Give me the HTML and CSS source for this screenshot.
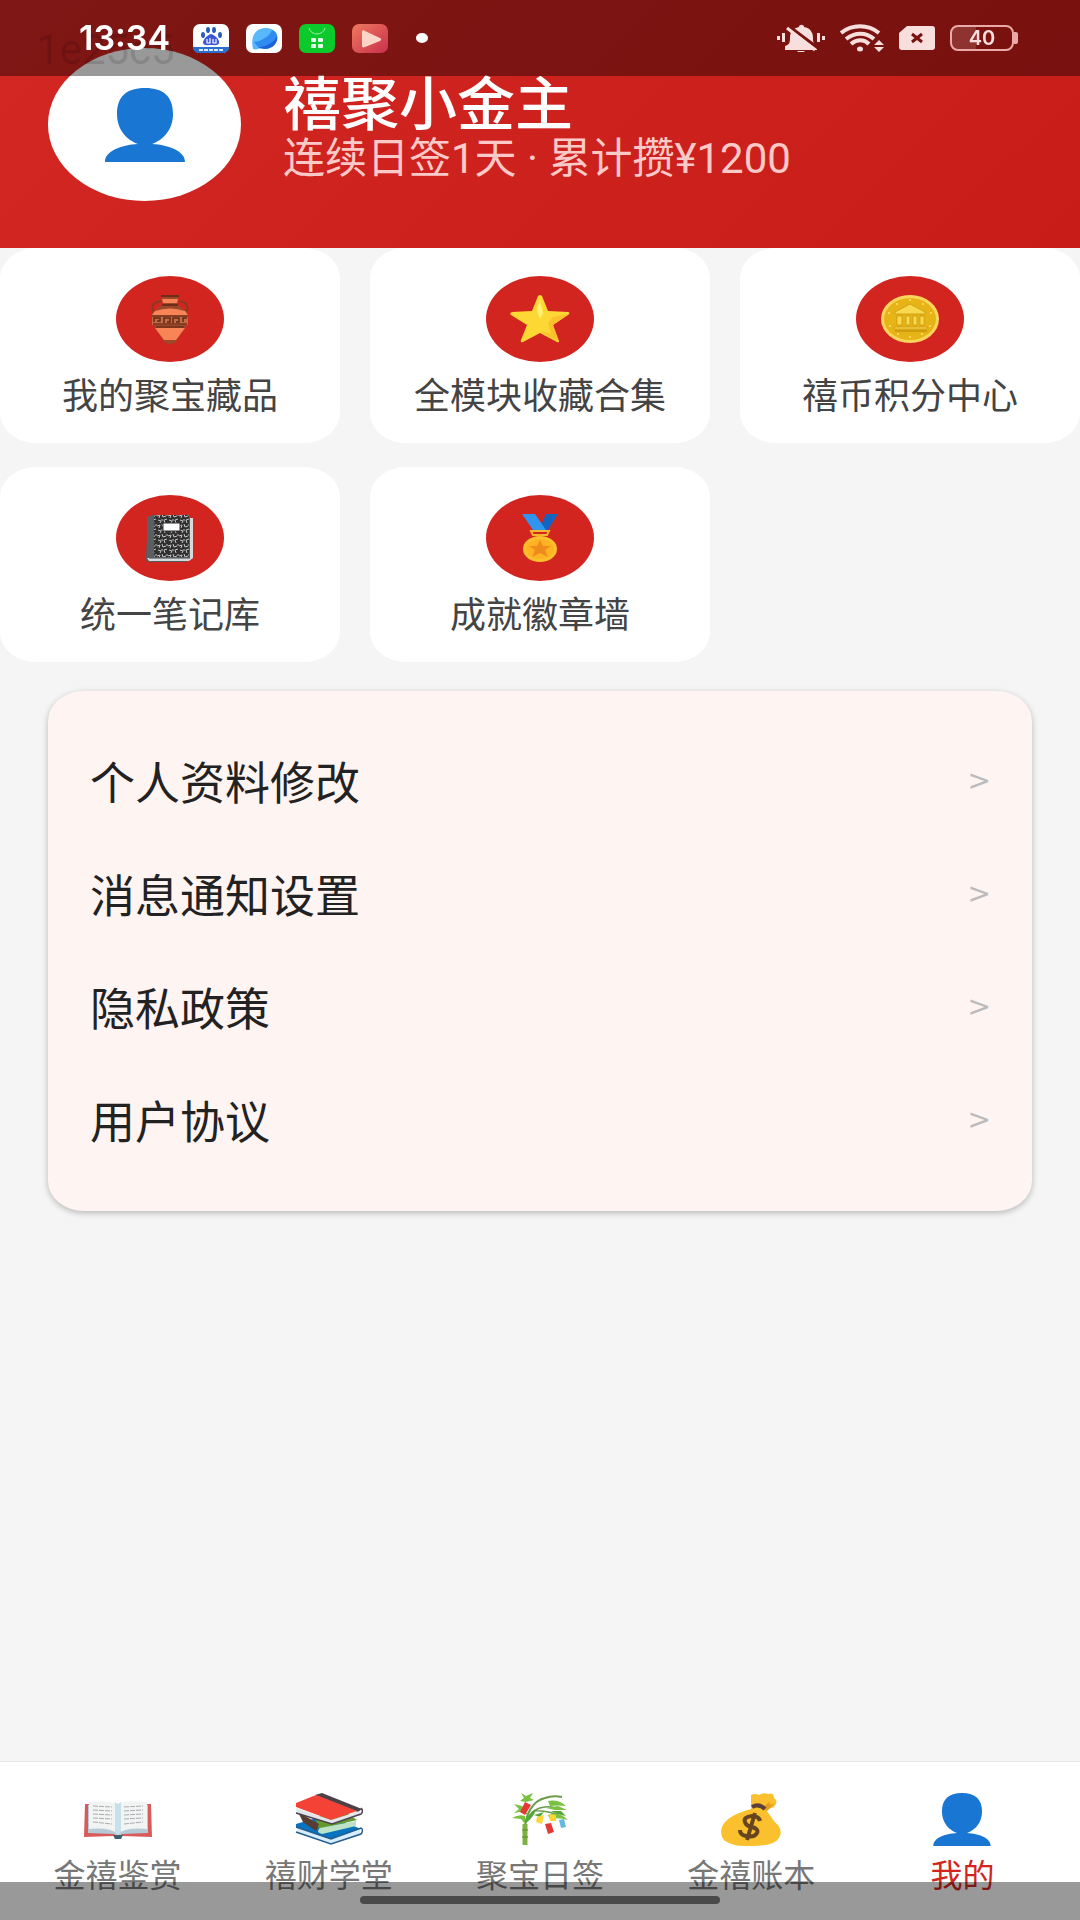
FILE: index.html
```html
<!DOCTYPE html>
<html lang="zh-CN">
<head>
  <meta charset="UTF-8">
  <meta name="viewport" content="width=device-width, initial-scale=1.0">
  <title>我的</title>
  <link rel="stylesheet" href="styles.css">
</head>
<body>

  <!-- Shared shapes -->
  <svg class="sprite" aria-hidden="true">
    <symbol id="person" viewBox="0 0 80 74">
      <path fill="#1976d2" d="M40 0C59 0 68 9 68 26C68 42 58 52 47 56C64 57 80 63 80 74H0C0 63 16 57 33 56C22 52 12 42 12 26C12 9 21 0 40 0Z"/>
    </symbol>
  </svg>

  <div class="status-bar">
    <div class="status-left">
      <span class="status-time">13:34</span>
      <svg class="app-icon" viewBox="0 0 36 29">
        <rect width="36" height="29" rx="7" fill="#fff"/>
        <path fill="#2a6fd0" d="M0 23H36C36 27 33 29 29 29H7C3 29 0 27 0 23Z"/>
        <g fill="#2a5fb4"><ellipse cx="10" cy="11" rx="2" ry="3"/><ellipse cx="15" cy="6" rx="2" ry="3"/><ellipse cx="21" cy="6" rx="2" ry="3"/><ellipse cx="27" cy="11" rx="2" ry="3"/></g>
        <path fill="#3a55d8" d="M18 10C22 11 27 16 26 19C25 22 21 21 18 21S11 22 10 19C10 16 14 11 18 10Z"/>
        <path stroke="#fff" stroke-width="1.2" fill="none" d="M14 15V19H17V14M20 15V19H23V15"/>
        <path stroke="#dceaff" stroke-width="2" stroke-dasharray="4 1" d="M6 26H31"/>
      </svg>
      <svg class="app-icon" viewBox="0 0 36 29">
        <rect width="36" height="29" rx="7" fill="#fff"/>
        <path fill="#59b8fb" d="M7 25C4 10 11 4 20 4C28 4 32 9 31 15C30 23 22 26 15 24C12 25 10 26 7 25Z"/>
        <path fill="#1c62d8" d="M31 11C33 18 27 25 19 25C16 25 13 24 12 23C21 22 28 18 31 11Z"/>
        <path fill="#2f8bf0" d="M8 18C14 18 24 12 26 6C30 8 31 10 31 12C28 19 20 22 12 23Z"/>
      </svg>
      <svg class="app-icon" viewBox="0 0 36 29">
        <rect width="36" height="29" rx="7" fill="#0cc92c"/>
        <path d="M10 4C12 12 24 12 26 4" fill="none" stroke="#9df0a6" stroke-width="1"/>
        <g fill="#e5ffe8"><rect x="12" y="14" width="5" height="4" rx="1"/><rect x="19" y="14" width="5" height="4" rx="1"/><rect x="12" y="20" width="5" height="4" rx="1"/><rect x="19" y="20" width="5" height="4" rx="1"/></g>
      </svg>
      <svg class="app-icon" viewBox="0 0 36 29">
        <defs><linearGradient id="player" x1="0" y1="0" x2="1" y2="1"><stop offset="0" stop-color="#f0795f"/><stop offset="1" stop-color="#c8304c"/></linearGradient></defs>
        <rect width="36" height="29" rx="7" fill="url(#player)"/>
        <path fill="#ffd5c8" d="M10 8C10 6 12 6 13 7L28 14C30 15 29 16 28 17L13 23C11 24 10 23 10 22Z"/>
      </svg>
      <span class="status-dot"></span>
    </div>
    <div class="status-right">
      <svg width="48" height="28" viewBox="0 0 48 28" fill="#f8dedd">
        <path d="M8 26V22C12 21 13 19 13 14C13 7 17 4 22 3C22 0 27 0 27 3C33 4 36 8 36 14C36 19 37 21 40 22V26Z"/>
        <path d="M20 27H28C27 29 21 29 20 27Z"/>
        <rect x="0" y="12" width="3" height="4"/><rect x="5" y="9" width="3" height="9"/><rect x="40" y="9" width="3" height="9"/><rect x="45" y="12" width="3" height="4"/>
        <path stroke="#781310" stroke-width="3" d="M13 3L41 24"/>
        <path stroke="#f8dedd" stroke-width="3" d="M10 4L38 26"/>
      </svg>
      <svg width="44" height="28" viewBox="0 0 44 28">
        <g fill="none" stroke="#f8dedd" stroke-width="4"><path d="M1 9C12 0 28 0 39 9"/><path d="M6 15C15 8 26 8 34 15"/><path d="M11 20C17 15 24 15 29 20"/></g>
        <ellipse cx="20" cy="25" rx="3" ry="2.5" fill="#f8dedd"/>
        <path fill="#f8dedd" d="M34 21L39 16L44 21ZM34 23H44L39 28Z"/>
      </svg>
      <svg width="36" height="28" viewBox="0 0 36 28">
        <path fill="#f8dedd" d="M0 9L8 2H33Q36 2 36 5V23Q36 26 33 26H3Q0 26 0 23Z"/>
        <path stroke="#781310" stroke-width="3" d="M13 10L23 18M23 10L13 18"/>
      </svg>
      <span class="battery">40</span>
    </div>
  </div>

  <header class="profile">
    <div class="avatar">
      <svg width="80" height="74"><use href="#person"/></svg>
    </div>
    <div class="profile-info">
      <h1 class="profile-name">禧聚小金主</h1>
      <p class="profile-stats">连续日签1天 · 累计攒¥1200</p>
    </div>
    <span class="user-code">1e25c5</span>
  </header>

  <main>
    <nav class="feature-grid">
      <a href="#" class="feature">
        <span class="feature-icon">
          <svg width="38" height="50" viewBox="0 0 38 50">
            <path d="M10 7C-1 9 1 14 3 20M28 7C39 9 37 14 35 20" fill="none" stroke="#8b3a20" stroke-width="2"/>
            <path fill="#9b482b" d="M10 1H28L26 9C29 14 34 15 37 20C39 32 29 39 25 48Q19 52 13 48C9 39-1 32 1 20C4 15 9 14 12 9Z"/>
            <path fill="#f98557" d="M11 5H27L26 9H12ZM4 17Q19 12 34 17L37 21H1ZM4 34H34L25 46H13Z"/>
            <path fill="#c86a41" d="M1 21H37V31H1Z"/>
            <path d="M1 22H37M2 30H36M5 33H33" stroke="#713019" stroke-width="1.5"/>
            <path d="M3 28V24H9V27H6M13 29V24H19V28H16M22 29V24H28V28H25M32 28V24H36" fill="none" stroke="#5f2b18" stroke-width="1.5"/>
            <path d="M10 2H28M11 11H27" stroke="#6f2c19" stroke-width="2"/>
          </svg>
        </span>
        <span class="feature-label">我的聚宝藏品</span>
      </a>
      <a href="#" class="feature">
        <span class="feature-icon">
          <svg width="60" height="48" viewBox="0 0 60 48">
            <path fill="#fdd835" d="M28 1Q30-1 32 1L38 16L58 17Q61 18 58 20L43 30L49 46Q49 48 47 47L30 38L13 47Q10 48 11 45L17 30L1 20Q-1 18 2 17L22 16Z"/>
            <path fill="#fff176" d="M30 4L33 18L30 24L27 15Z"/>
            <path fill="#fbc02d" d="M43 22L58 19L43 30L48 46L30 36L41 39L38 28Z"/>
          </svg>
        </span>
        <span class="feature-label">全模块收藏合集</span>
      </a>
      <a href="#" class="feature">
        <span class="feature-icon">
          <svg width="58" height="48" viewBox="0 0 58 48">
            <ellipse cx="29" cy="24" rx="29" ry="24" fill="#f9d65b"/>
            <ellipse cx="29" cy="24" rx="26" ry="21" fill="#e6b417"/>
            <path fill="#f8d94d" stroke="#c7930b" stroke-width=".7" d="M14 17L29 9L44 17V19H14ZM16 21H21V30H16ZM25 21H29V30H25ZM32 21H36V30H32ZM39 21H43V30H39ZM13 32H46V34H13Z"/>
            <path d="M14 36H46" stroke="#b9860b"/>
            <g fill="#ffdf70"><circle cx="29" cy="5" r="1"/><circle cx="16" cy="9" r="1"/><circle cx="42" cy="9" r="1"/><circle cx="8" cy="18" r="1"/><circle cx="50" cy="18" r="1"/><circle cx="9" cy="31" r="1"/><circle cx="49" cy="31" r="1"/><circle cx="17" cy="39" r="1"/><circle cx="29" cy="42" r="1"/><circle cx="41" cy="39" r="1"/></g>
          </svg>
        </span>
        <span class="feature-label">禧币积分中心</span>
      </a>
      <a href="#" class="feature">
        <span class="feature-icon">
          <svg width="48" height="48" viewBox="0 0 48 48">
            <defs>
              <pattern id="speckle" width="11" height="10" patternUnits="userSpaceOnUse">
                <rect width="11" height="10" fill="#303030"/>
                <path d="M0 2L3 1L2 4M5 0L6 3L9 2M10 5L7 6L8 9M1 6L4 7L3 9M5 5L5 7M10 0V2" fill="none" stroke="#c4c4c4" stroke-width="1"/>
              </pattern>
            </defs>
            <path fill="#565b60" d="M2 3L7 1H44V44L40 48H2Q0 47 0 44Z"/>
            <path fill="#d5dadd" d="M44 4H47V44L43 47H3L1 44H44Z"/>
            <path fill="#8b9298" d="M3 44H44V45H3Z"/>
            <rect x="8" y="1" width="35" height="42" fill="url(#speckle)"/>
            <path fill="#5b5f62" d="M1 3L8 1V43L1 44Z"/>
            <rect x="17" y="9" width="17" height="8" fill="#fff" stroke="#333"/>
          </svg>
        </span>
        <span class="feature-label">统一笔记库</span>
      </a>
      <a href="#" class="feature">
        <span class="feature-icon">
          <svg width="36" height="50" viewBox="0 0 36 50">
            <path fill="#1565c0" d="M24 1H36L26 17H17Z"/>
            <path fill="#2f95ee" d="M0 1H13L24 17H11Z"/>
            <path d="M9 18H27L25 22H11Z" fill="none" stroke="#f4b72f" stroke-width="2"/>
            <ellipse cx="18" cy="36" rx="17" ry="13" fill="#fcc02f"/>
            <ellipse cx="18" cy="36" rx="14" ry="10" fill="#ffb322"/>
            <path fill="#ef8b1c" d="M18 27L21 33H29L23 37L26 44L18 40L10 44L13 37L7 33H15Z"/>
          </svg>
        </span>
        <span class="feature-label">成就徽章墙</span>
      </a>
    </nav>

    <section class="settings">
      <a href="#" class="settings-item"><span>个人资料修改</span><span class="arrow">&gt;</span></a>
      <a href="#" class="settings-item"><span>消息通知设置</span><span class="arrow">&gt;</span></a>
      <a href="#" class="settings-item"><span>隐私政策</span><span class="arrow">&gt;</span></a>
      <a href="#" class="settings-item"><span>用户协议</span><span class="arrow">&gt;</span></a>
    </section>
  </main>

  <nav class="tab-bar">
    <a href="#" class="tab">
      <svg class="tab-icon" viewBox="0 0 68 53">
        <path fill="#d85b5b" d="M1 11H67L68 44L38 43L34 46L30 43L0 44Z"/>
        <path fill="#b6cad5" d="M4 12H64V40L38 41L34 45L30 41L4 40Z"/>
        <path fill="#f2f3f3" d="M5 9Q25 7 34 11Q43 7 63 9V36Q42 34 34 41Q25 34 5 36Z"/>
        <path fill="#c6e0ec" d="M31 9L34 11L37 9V39L34 42L31 39Z"/>
        <path d="M9 13L28 14M9 17L28 18M9 21L28 22M9 25L28 26M9 29L28 31M40 14L59 13M40 18L59 17M40 22L59 21M40 26L59 25M40 31L59 29" stroke="#a9adaf" stroke-width="1" stroke-dasharray="5 1"/>
        <path fill="#40616c" d="M29 42H39L37 46H31Z"/>
      </svg>
      <span class="tab-label">金禧鉴赏</span>
    </a>
    <a href="#" class="tab">
      <svg class="tab-icon" viewBox="0 0 68 53">
        <path fill="#0873be" d="M1 31L32 22L66 36L36 47L1 34Z"/>
        <path fill="#d7edfb" d="M2 35L36 46L65 36V41L36 51L2 39Z"/>
        <path d="M1 39L36 51L66 41Q69 37 66 35L36 46L1 34" fill="none" stroke="#235e91" stroke-width="1.5"/>
        <path fill="#65992f" d="M20 24L50 19L62 27L24 36Z"/>
        <path fill="#bce2c7" d="M25 35L61 28V33L27 41Q20 39 25 35Z"/>
        <path fill="#593c32" d="M3 19L24 31L21 38L8 29Z"/>
        <path fill="#4b4147" d="M20 2L27 0L67 16L63 19Z"/>
        <path fill="#f44336" d="M1 10L21 2L62 18L36 27L1 14Z"/>
        <path fill="#e4e5e9" d="M1 15L36 27L65 18V22L37 31L2 20Z"/>
        <path d="M1 20L37 31L66 21Q69 18 66 15" fill="none" stroke="#494351" stroke-width="1.5"/>
      </svg>
      <span class="tab-label">禧财学堂</span>
    </a>
    <a href="#" class="tab">
      <svg class="tab-icon" viewBox="0 0 68 53">
        <path d="M19 34C20 22 26 8 39 5Q47 2 56 4" fill="none" stroke="#6b9c4a" stroke-width="2"/>
        <path d="M25 20Q36 11 50 15M27 18Q38 17 52 22" fill="none" stroke="#6b9c4a" stroke-width="1.5"/>
        <path d="M19 52V31" stroke="#7cb342" stroke-width="5"/>
        <path d="M16 44H22M16 37H22" stroke="#558b2f" stroke-width="1"/>
        <path fill="#7ac142" d="M15 0L20 3L27 0L24 5L28 7L20 9L14 8L18 5ZM8 11L16 13L22 22L14 19L8 20L13 16ZM6 25Q13 21 19 23L19 31L15 26ZM42 8Q52 6 60 13Q51 12 44 13ZM40 15L52 13L61 17L49 17ZM42 22Q53 18 62 27Q53 24 44 26Z"/>
        <path fill="#57a639" d="M19 28Q22 20 30 17Q27 25 20 30ZM28 22L38 19L34 24ZM45 18L55 18L60 23L51 21Z"/>
        <path fill="#e53935" d="M19 9L25 12L19 22L14 19ZM39 31L45 30L48 39L42 41Z"/>
        <path fill="#fdd835" d="M31 24L38 22L36 31L30 29ZM43 21L50 22L50 28L44 28Z"/>
        <path fill="#64b9de" d="M53 27L58 26L60 34L55 35Z"/>
      </svg>
      <span class="tab-label">聚宝日签</span>
    </a>
    <a href="#" class="tab">
      <svg class="tab-icon" viewBox="0 0 68 53">
        <path fill="#fbc02d" d="M34 2Q38 0 42 2Q46-1 51 1Q57-1 57 5Q62 8 57 14L49 17C54 23 56 28 61 32Q66 38 62 45Q57 53 35 53Q10 54 5 44C1 31 12 22 34 16Z"/>
        <path fill="#e89a1c" d="M44 14Q49 13 53 8Q50 14 58 10L50 18Z"/>
        <path d="M35 14Q42 10 48 16" fill="none" stroke="#5d4037" stroke-width="4"/>
        <path d="M43 28Q42 23 35 23Q26 24 28 29Q29 33 35 34Q42 36 40 40Q37 45 29 43Q23 42 23 37M38 20L30 47" fill="none" stroke="#66451f" stroke-width="4"/>
      </svg>
      <span class="tab-label">金禧账本</span>
    </a>
    <a href="#" class="tab active">
      <svg class="tab-icon"><use href="#person"/></svg>
      <span class="tab-label">我的</span>
    </a>
  </nav>

  <div class="home-bar"><span class="home-pill"></span></div>

</body>
</html>
```
FILE: styles.css
```css
* {
  box-sizing: border-box;
}

body {
  margin: 0;
  min-height: 100vh;
  display: flex;
  flex-direction: column;
  background-color: #f5f5f5;
  color: #222;
  font-family: Roboto, "Noto Sans CJK SC", sans-serif;
}

a {
  color: inherit;
  text-decoration: none;
}

svg {
  display: block;
}

.sprite {
  position: absolute;
  width: 0;
  height: 0;
}

/* System status bar, lies over the header */
.status-bar {
  position: fixed;
  top: 0;
  left: 0;
  right: 0;
  z-index: 2;
  height: 76px;
  padding: 0 66px 0 79px;
  display: flex;
  justify-content: space-between;
  align-items: center;
  background-color: rgba(0, 0, 0, 0.4);
  color: #fff;
  font-family: Inter, sans-serif;
}

.status-left,
.status-right {
  display: flex;
  align-items: center;
}

.status-left {
  gap: 17px;
}

.status-right {
  gap: 15px;
}

.status-time {
  min-width: 97px;
  font-size: 34px;
  font-weight: 600;
  line-height: 32px;
}

.app-icon {
  width: 36px;
  height: 29px;
}

.status-dot {
  width: 12px;
  height: 10px;
  margin-left: 11px;
  border-radius: 50%;
  background-color: #fff;
}

.battery {
  position: relative;
  width: 64px;
  height: 26px;
  border: 2px solid #e9aaa8;
  border-radius: 8px;
  background: linear-gradient(to right, #8f3331 40%, transparent 40%);
  color: #f8dedd;
  font-size: 20px;
  font-weight: 600;
  line-height: 22px;
  text-align: center;
}

.battery::after {
  content: "";
  position: absolute;
  top: 5px;
  right: -6px;
  width: 4px;
  height: 12px;
  border-radius: 0 2px 2px 0;
  background-color: #e9aaa8;
}

/* Profile header */
.profile {
  position: relative;
  display: flex;
  align-items: center;
  gap: 42px;
  padding: 48px 48px 47px;
  background: linear-gradient(135deg, #d32723, #c81c18);
  color: #fff;
}

.avatar {
  width: 193px;
  height: 153px;
  display: flex;
  justify-content: center;
  align-items: center;
  border-radius: 50%;
  background-color: #fff;
}

.profile-info {
  padding-top: 8px;
}

.profile-name {
  margin: 0;
  font-size: 58px;
  font-weight: 500;
  line-height: 60px;
}

.profile-stats {
  margin: 0;
  color: #fbc9c7;
  font-size: 42px;
  line-height: 48px;
}

.user-code {
  position: absolute;
  top: 26px;
  left: 36px;
  color: rgba(0, 0, 0, 0.15);
  font-size: 42px;
  line-height: 48px;
}

/* Feature cards */
.feature-grid {
  display: grid;
  grid-template-columns: repeat(3, 1fr);
  gap: 24px 30px;
}

.feature {
  display: flex;
  flex-direction: column;
  align-items: center;
  gap: 11px;
  padding: 28px 0 22px;
  border-radius: 36px / 30px;
  background-color: #fff;
}

.feature-icon {
  width: 108px;
  height: 86px;
  display: flex;
  justify-content: center;
  align-items: center;
  border-radius: 50%;
  background-color: #d32520;
}

.feature-label {
  color: #444;
  font-size: 36px;
  line-height: 48px;
}

/* Settings list */
.settings {
  margin: 29px 48px;
  padding: 33px 41px 35px 42px;
  border-radius: 36px / 30px;
  background-color: #fef4f2;
  box-shadow: 0 2px 6px rgba(0, 0, 0, 0.25);
}

.settings-item {
  display: flex;
  justify-content: space-between;
  align-items: center;
  height: 113px;
  font-size: 45px;
}

.arrow {
  color: #bbb;
  font-family: "DejaVu Sans", sans-serif;
  font-size: 28px;
}

/* Bottom tabs */
.tab-bar {
  display: flex;
  margin-top: auto;
  padding: 31px 12px 20px;
  border-top: 1px solid #e8e8e8;
  background-color: #fff;
}

.tab {
  flex: 1;
  display: flex;
  flex-direction: column;
  align-items: center;
  gap: 6px;
  color: #777;
}

.tab-icon {
  width: 68px;
  height: 53px;
}

.tab-label {
  font-size: 32px;
  line-height: 48px;
}

.tab.active {
  color: #d32520;
}

/* System gesture bar, lies over the tabs */
.home-bar {
  position: fixed;
  bottom: 0;
  left: 0;
  right: 0;
  z-index: 2;
  height: 38px;
  padding-top: 14px;
  background-color: rgba(0, 0, 0, 0.4);
}

.home-pill {
  display: block;
  width: 360px;
  height: 8px;
  margin: 0 auto;
  border-radius: 4px;
  background-color: #4a4a4a;
}
```
